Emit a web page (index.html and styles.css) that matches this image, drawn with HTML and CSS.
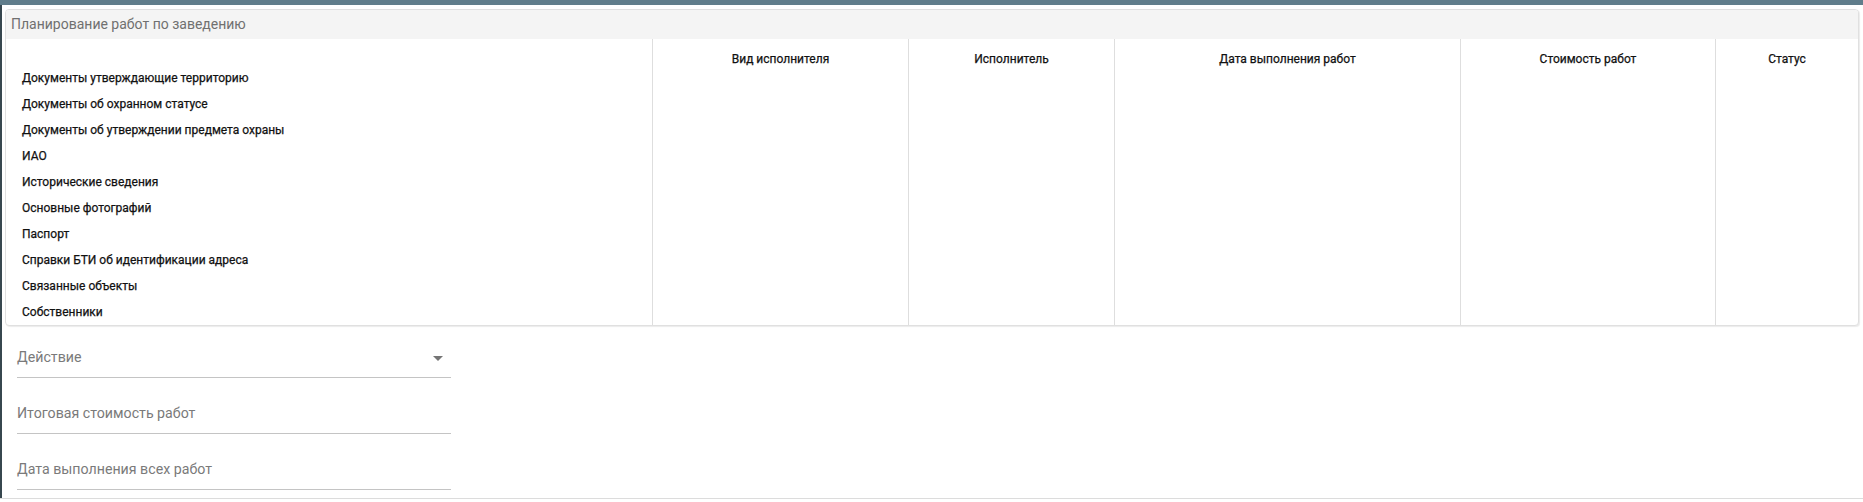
FILE: index.html
```html
<!DOCTYPE html>
<html lang="ru">
<head>
<meta charset="utf-8">
<title>Планирование работ</title>
<link rel="stylesheet" href="styles.css">
</head>
<body>
<div class="app">
  <div class="topbar"></div>
  <div class="body-row">
    <div class="sidebar"></div>
    <div class="content">
      <div class="card">
        <div class="card-header">Планирование работ по заведению</div>
        <div class="grid">
          <div class="col col-labels">
            <div class="row">Документы утверждающие территорию</div>
            <div class="row">Документы об охранном статусе</div>
            <div class="row">Документы об утверждении предмета охраны</div>
            <div class="row">ИАО</div>
            <div class="row">Исторические сведения</div>
            <div class="row">Основные фотографий</div>
            <div class="row">Паспорт</div>
            <div class="row">Справки БТИ об идентификации адреса</div>
            <div class="row">Связанные объекты</div>
            <div class="row">Собственники</div>
          </div>
          <div class="col col-data c2"><div class="col-head">Вид исполнителя</div></div>
          <div class="col col-data c3"><div class="col-head">Исполнитель</div></div>
          <div class="col col-data c4"><div class="col-head">Дата выполнения работ</div></div>
          <div class="col col-data c5"><div class="col-head">Стоимость работ</div></div>
          <div class="col col-data c6"><div class="col-head">Статус</div></div>
        </div>
      </div>
      <div class="fields">
        <div class="field">
          <span class="field-label">Действие</span>
          <span class="arrow"></span>
        </div>
        <div class="field">
          <span class="field-label">Итоговая стоимость работ</span>
        </div>
        <div class="field">
          <span class="field-label">Дата выполнения всех работ</span>
        </div>
      </div>
    </div>
  </div>
</div>
</body>
</html>
```

FILE: styles.css
```css
html, body {
  margin: 0;
  padding: 0;
  background: #ffffff;
}

body {
  font-family: Roboto, "Liberation Sans", Arial, sans-serif;
  color: #212121;
}

.app {
  width: 1863px;
  height: 502px;
  display: flex;
  flex-direction: column;
  overflow: hidden;
}

.topbar {
  height: 5px;
  background: #607d8b;
  flex: none;
}

.body-row {
  display: flex;
  height: 493px;
  flex: none;
  border-bottom: 1px solid #dcdcdc;
}

.sidebar {
  width: 2px;
  background: #37474f;
  flex: none;
}

.content {
  flex: 1;
  padding: 4px 4px 0 3px;
  display: flex;
  flex-direction: column;
  overflow: hidden;
}

.card {
  flex: none;
  border: 1px solid #e0e0e0;
  border-radius: 4px;
  box-shadow: 1px 1px 1px rgba(0, 0, 0, 0.08);
  background: #fff;
  overflow: hidden;
}

.card-header {
  height: 29px;
  line-height: 29px;
  background: #f4f4f4;
  color: #707070;
  font-size: 14px;
  padding-left: 5px;
}

.grid {
  display: flex;
  height: 286px;
}

.col {
  flex: none;
  font-size: 12px;
  font-weight: 400;
  color: #111111;
  -webkit-text-stroke: 0.25px #111111;
}

.col-labels {
  width: 646px;
  padding-top: 26px;
  box-sizing: border-box;
  padding-left: 16px;
}

.row {
  height: 26px;
  line-height: 26px;
  white-space: nowrap;
}

.col-data {
  border-left: 1px solid #dedede;
  text-align: center;
}

.col-head {
  padding-top: 12px;
  line-height: 16px;
}

.c2 { width: 255px; }
.c3 { width: 205px; }
.c4 { width: 345px; }
.c5 { width: 254px; }
.c6 { flex: 1; }

.fields {
  flex: none;
  padding-top: 21px;
  padding-left: 12px;
}

.field {
  width: 434px;
  height: 30px;
  border-bottom: 1px solid #c4c4c4;
  margin-bottom: 25px;
  display: flex;
  align-items: flex-start;
  justify-content: space-between;
}

.field-label {
  font-size: 14.2px;
  line-height: 20px;
  color: #7a7a7a;
}

.arrow {
  width: 0;
  height: 0;
  border-left: 5px solid transparent;
  border-right: 5px solid transparent;
  border-top: 5px solid #757575;
  margin-top: 9px;
  margin-right: 8px;
}
```
